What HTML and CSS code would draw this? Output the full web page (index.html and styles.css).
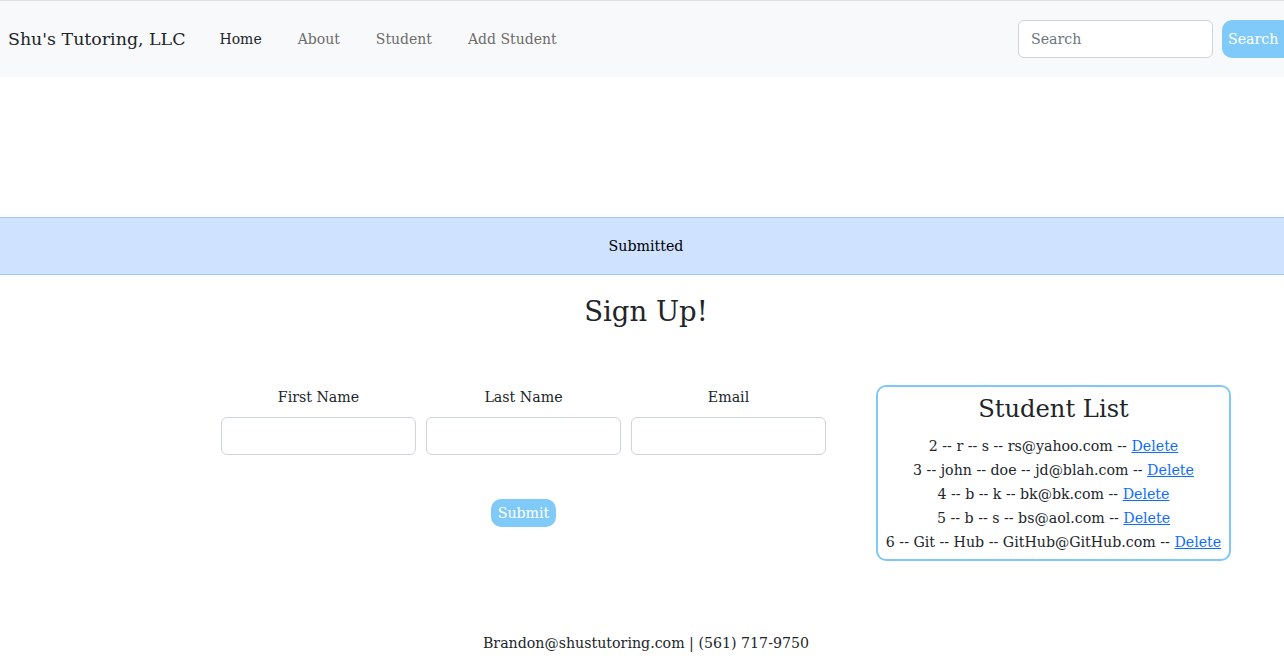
FILE: index.html
```html
<!DOCTYPE html>
<html>
<head>
<meta charset="utf-8">
<link rel="stylesheet" href="styles.css">
</head>
<body>
<nav class="navbar">
  <span class="brand">Shu's Tutoring, LLC</span>
  <ul class="nav-links">
    <li class="active">Home</li>
    <li>About</li>
    <li>Student</li>
    <li>Add Student</li>
  </ul>
  <form class="search">
    <input class="search-input" type="text" placeholder="Search">
    <button class="btn btn-search" type="button">Search</button>
  </form>
</nav>
<div class="spacer"></div>
<div class="alert">Submitted</div>
<h1 class="title">Sign Up!</h1>
<div class="content">
  <div class="signup">
    <div class="fields">
      <div class="field"><label>First Name</label><input type="text"></div>
      <div class="field"><label>Last Name</label><input type="text"></div>
      <div class="field"><label>Email</label><input type="text"></div>
    </div>
    <div class="submit-row"><button class="btn btn-submit" type="button">Submit</button></div>
  </div>
  <div class="list">
    <h2>Student List</h2>
    <div class="row-item">2 -- r -- s -- rs@yahoo.com -- <a href="#">Delete</a></div>
    <div class="row-item">3 -- john -- doe -- jd@blah.com -- <a href="#">Delete</a></div>
    <div class="row-item">4 -- b -- k -- bk@bk.com -- <a href="#">Delete</a></div>
    <div class="row-item">5 -- b -- s -- bs@aol.com -- <a href="#">Delete</a></div>
    <div class="row-item">6 -- Git -- Hub -- GitHub@GitHub.com -- <a href="#">Delete</a></div>
  </div>
</div>
<footer class="footer">Brandon@shustutoring.com | (561) 717-9750</footer>
</body>
</html>
```

FILE: styles.css
```css
* { box-sizing: border-box; }
body {
  margin: 0;
  font-family: "DejaVu Serif", Georgia, serif;
  font-size: 14.2px;
  line-height: 24px;
  color: #212529;
  background: #fff;
}
.navbar {
  display: flex;
  align-items: center;
  height: 77px;
  background: #f8f9fa;
  border-top: 1px solid #dee2e6;
  padding-left: 8px;
}
.brand {
  font-size: 17.4px;
  color: #212529;
  margin-right: 34px;
}
.nav-links {
  display: flex;
  list-style: none;
  margin: 0;
  padding: 0;
  gap: 36px;
  font-size: 14px;
  color: #6c6c6c;
}
.nav-links .active { color: #212529; }
.search {
  margin-left: auto;
  display: flex;
  align-items: center;
  gap: 9px;
  margin-right: -8px;
}
.search-input {
  width: 195px;
  height: 38px;
  border: 1px solid #ced4da;
  border-radius: 6px;
  padding: 0 12px;
  font-family: inherit;
  font-size: 14.2px;
  color: #212529;
  background: #fff;
}
.search-input::placeholder { color: #6c757d; }
.btn {
  background: #7fcaf8;
  color: #fff;
  border: none;
  border-radius: 10px;
  font-family: inherit;
  font-size: 14.2px;
  height: 38px;
  padding: 0 6px;
}
.btn-search { width: 70px; text-align: left; }
.spacer { height: 140px; }
.alert {
  height: 58px;
  background: #cfe2ff;
  border-top: 1px solid #9ec5fe;
  border-bottom: 1px solid #9ec5fe;
  display: flex;
  align-items: center;
  justify-content: center;
  padding-left: 8px;
  color: #000;
}
.title {
  margin: 14px 0 0;
  padding-left: 8px;
  text-align: center;
  font-weight: normal;
  font-size: 27.5px;
  line-height: 44px;
}
.content {
  display: flex;
  align-items: flex-start;
  padding-left: 221px;
  margin-top: 52px;
  gap: 50px;
}
.signup { width: 605px; }
.fields {
  display: flex;
  gap: 10px;
}
.field {
  width: 195px;
  display: flex;
  flex-direction: column;
  align-items: center;
}
.field label { line-height: 24px; margin-bottom: 8px; }
.field input {
  width: 195px;
  height: 38px;
  border: 1px solid #ced4da;
  border-radius: 6px;
  background: #fff;
}
.submit-row {
  display: flex;
  justify-content: center;
  margin-top: 44px;
}
.btn-submit {
  height: 28px;
  padding: 0 7px;
}
.list {
  width: 355px;
  border: 2px solid #80c9f5;
  border-radius: 10px;
  text-align: center;
  padding: 3px 0 5px;
}
.list h2 {
  margin: 0 0 6px;
  font-weight: normal;
  font-size: 24.2px;
  line-height: 38px;
}
.row-item { line-height: 24px; white-space: nowrap; }
.row-item a { color: #0d6efd; }
.footer {
  text-align: center;
  padding-left: 8px;
  margin-top: 70px;
}
```
